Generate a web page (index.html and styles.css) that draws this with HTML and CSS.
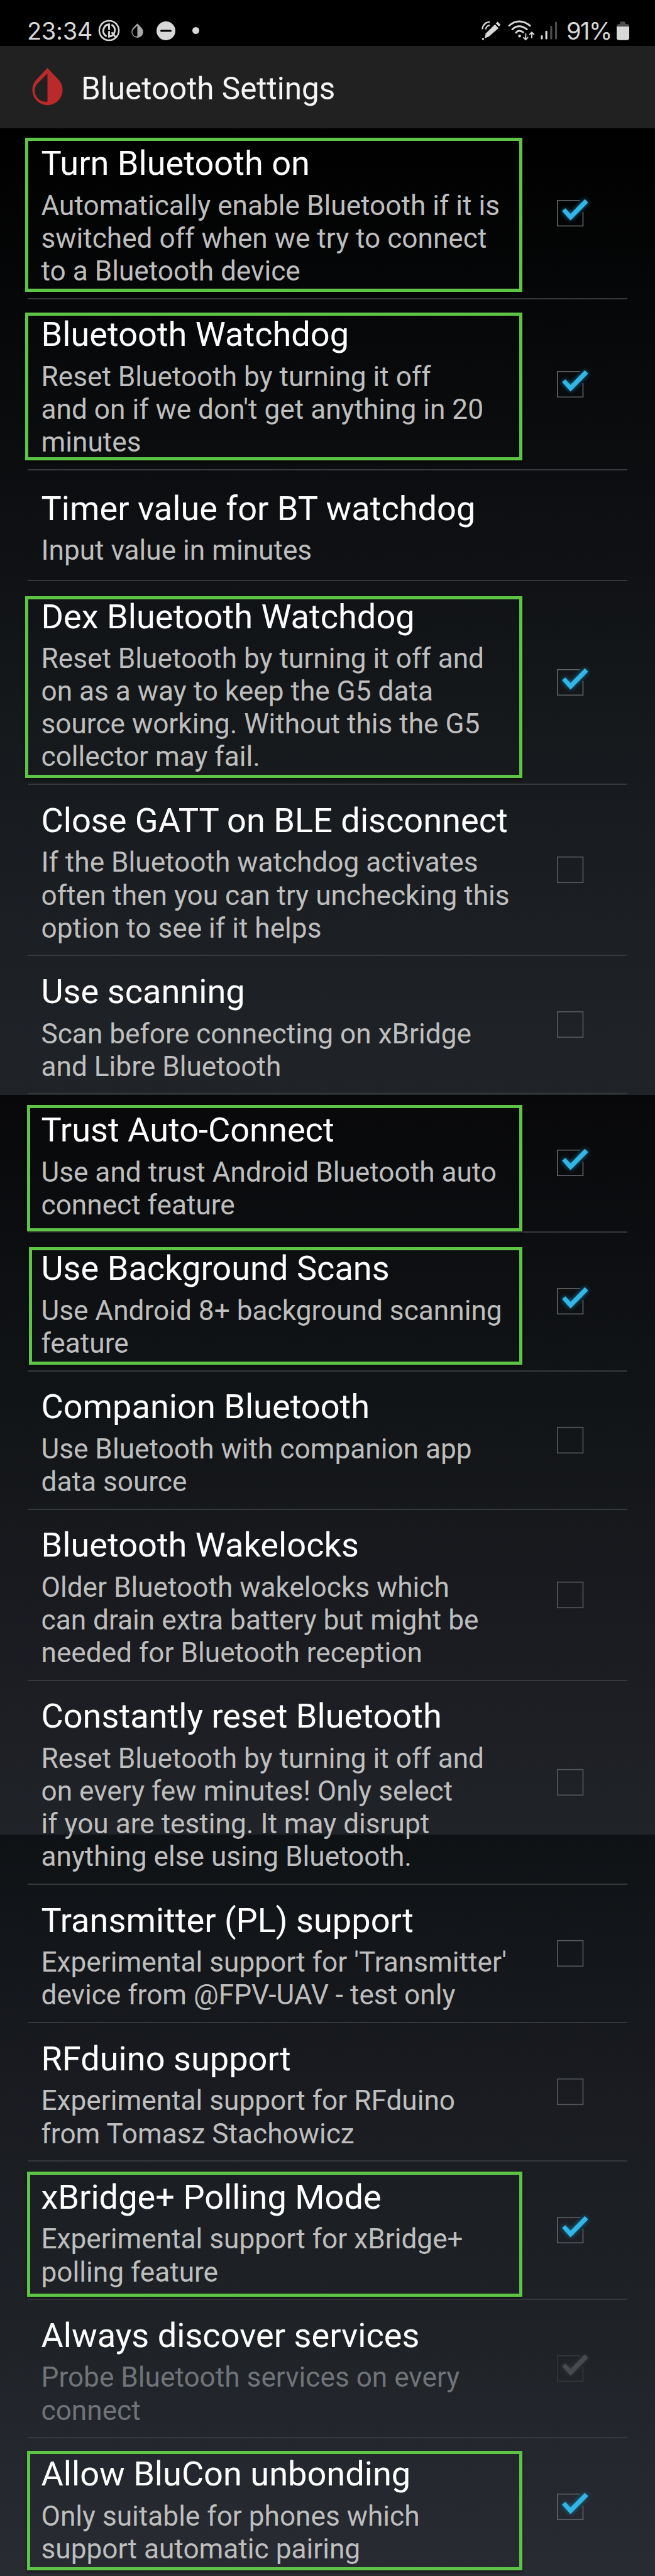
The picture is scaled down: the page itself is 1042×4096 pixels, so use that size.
FILE: index.html
```html
<!DOCTYPE html>
<html lang="en">
<head>
<meta charset="utf-8">
<title>Bluetooth Settings</title>
<link rel="stylesheet" href="styles.css">
</head>
<body>
<svg width="0" height="0" class="defs">
  <symbol id="drop" viewBox="0 0 50 62"><path fill-rule="evenodd" d="M25 0 L42 18 A24.500 24.500 0 1 1 8 18 Z M25 9 L12 22 A18 18 0 0 0 25 54.500 Z" fill="currentColor"/></symbol>
  <symbol id="off" viewBox="0 0 64 60"><rect x="7" y="9" width="42" height="42" fill="none" stroke="#55585b" stroke-width="1.700"/></symbol>
  <symbol id="on" viewBox="0 0 64 60"><path d="M44 9 H7 V51 H49 V28" fill="none" stroke="#606366" stroke-width="1.700"/><path class="tick" d="M14.500 26.500 L20 22 L28.500 31 L52 7 L57.500 12.500 L28.500 42 Z"/></symbol>
</svg>
<div class="phone">
  <header class="status">
    <span class="clock">23:34</span>
    <svg class="s-sync" viewBox="0 0 36 36"><g fill="none" stroke="#d8d8d8" stroke-linecap="round"><circle cx="18" cy="18" r="16" stroke-width="2.600"/><path d="M13 27 A10.500 10.500 0 0 1 18 8 V16" stroke-width="3"/><path d="M23 9 A10.500 10.500 0 0 1 18 28 V20 M23 22 L28 28" stroke-width="3"/></g></svg>
    <svg class="s-drop"><use href="#drop"/></svg>
    <svg class="s-dnd" viewBox="0 0 30 30"><circle cx="15" cy="15" r="15" fill="#d8d8d8"/><path d="M7.500 15H22.500" stroke="#000" stroke-width="3" stroke-linecap="round"/></svg>
    <span class="s-dot"></span>
    <span class="spacer"></span>
    <svg class="s-pen" viewBox="0 0 31 32"><g fill="none" stroke="#d8d8d8" stroke-width="2.400"><path d="M1.500 14A12 12 0 0 1 13.500 2"/><path d="M7 14A7 7 0 0 1 13.500 7.500"/></g><path d="M22 6L28 12L12 26L5 29L7 21Z" fill="#d8d8d8"/><path d="M25 3L30 8" stroke="#d8d8d8" stroke-width="4"/><circle cx="2.500" cy="30" r="1.800" fill="#d8d8d8"/></svg>
    <svg class="s-wifi" viewBox="0 0 44 34"><g fill="none" stroke="#d8d8d8" stroke-width="3" stroke-linecap="round"><path d="M2 9Q18-5 36 9"/><path d="M7 15Q18 5 31 15"/><path d="M13 20.500Q18 15 25 20"/></g><circle cx="19" cy="26" r="2.300" fill="#d8d8d8"/><path d="M29 22V32M25 28L29 32L33 28M39 30V20M35 24L39 20L43 24" fill="none" stroke="#d8d8d8" stroke-width="2"/></svg>
    <svg class="s-bars" viewBox="0 0 28 30"><g stroke-width="3.300" stroke-linecap="round"><path d="M2 24.500V28M9.500 17V28" stroke="#d8d8d8"/><path d="M17.500 9V28M25.500 2V28" stroke="#4c4c4c"/></g></svg>
    <span class="batt">91%</span>
    <svg class="s-batt" viewBox="0 0 21 31"><rect x="5.500" width="9" height="6" rx="2" fill="#4c4c4c"/><rect y="4" width="21" height="27" rx="4" fill="#4c4c4c"/><path d="M0 8.500H21V27Q21 31 17 31H4Q0 31 0 27Z" fill="#d8d8d8"/></svg>
  </header>
  <div class="bar"><svg class="logo"><use href="#drop"/></svg><h1>Bluetooth Settings</h1></div>
  <main class="list">
    <section class="row"><div class="text"><h2>Turn Bluetooth on</h2><p>Automatically enable Bluetooth if it is<br>switched off when we try to connect<br>to a Bluetooth device</p></div><svg class="box"><use href="#on"/></svg><i class="mark m1"></i></section>
    <section class="row"><div class="text"><h2>Bluetooth Watchdog</h2><p>Reset Bluetooth by turning it off<br>and on if we don't get anything in 20<br>minutes</p></div><svg class="box"><use href="#on"/></svg><i class="mark m2"></i></section>
    <section class="row"><div class="text"><h2>Timer value for BT watchdog</h2><p>Input value in minutes</p></div></section>
    <section class="row"><div class="text"><h2>Dex Bluetooth Watchdog</h2><p>Reset Bluetooth by turning it off and<br>on as a way to keep the G5 data<br>source working. Without this the G5<br>collector may fail.</p></div><svg class="box"><use href="#on"/></svg><i class="mark m3"></i></section>
    <section class="row"><div class="text"><h2>Close GATT on BLE disconnect</h2><p>If the Bluetooth watchdog activates<br>often then you can try unchecking this<br>option to see if it helps</p></div><svg class="box"><use href="#off"/></svg></section>
    <section class="row"><div class="text"><h2>Use scanning</h2><p>Scan before connecting on xBridge<br>and Libre Bluetooth</p></div><svg class="box"><use href="#off"/></svg></section>
    <section class="row"><div class="text"><h2>Trust Auto-Connect</h2><p>Use and trust Android Bluetooth auto<br>connect feature</p></div><svg class="box"><use href="#on"/></svg><i class="mark m4"></i></section>
    <section class="row"><div class="text"><h2>Use Background Scans</h2><p>Use Android 8+ background scanning<br>feature</p></div><svg class="box"><use href="#on"/></svg><i class="mark m5"></i></section>
    <section class="row"><div class="text"><h2>Companion Bluetooth</h2><p>Use Bluetooth with companion app<br>data source</p></div><svg class="box"><use href="#off"/></svg></section>
    <section class="row"><div class="text"><h2>Bluetooth Wakelocks</h2><p>Older Bluetooth wakelocks which<br>can drain extra battery but might be<br>needed for Bluetooth reception</p></div><svg class="box"><use href="#off"/></svg></section>
    <section class="row"><div class="text"><h2>Constantly reset Bluetooth</h2><p>Reset Bluetooth by turning it off and<br>on every few minutes! Only select<br>if you are testing. It may disrupt<br>anything else using Bluetooth.</p></div><svg class="box"><use href="#off"/></svg></section>
    <section class="row"><div class="text"><h2>Transmitter (PL) support</h2><p>Experimental support for 'Transmitter'<br>device from @FPV-UAV - test only</p></div><svg class="box"><use href="#off"/></svg></section>
    <section class="row"><div class="text"><h2>RFduino support</h2><p>Experimental support for RFduino<br>from Tomasz Stachowicz</p></div><svg class="box"><use href="#off"/></svg></section>
    <section class="row"><div class="text"><h2>xBridge+ Polling Mode</h2><p>Experimental support for xBridge+<br>polling feature</p></div><svg class="box"><use href="#on"/></svg><i class="mark m6"></i></section>
    <section class="row disabled"><div class="text"><h2>Always discover services</h2><p>Probe Bluetooth services on every<br>connect</p></div><svg class="box"><use href="#on"/></svg></section>
    <section class="row"><div class="text"><h2>Allow BluCon unbonding</h2><p>Only suitable for phones which<br>support automatic pairing</p></div><svg class="box"><use href="#on"/></svg><i class="mark m7"></i></section>
  </main>
</div>
</body>
</html>
```
FILE: styles.css
```css
* { box-sizing: border-box; }
body { margin: 0; background: #000; }
.defs { display: block; }
.phone {
  width: 1042px;
  height: 4096px;
  overflow: hidden;
  font-family: Roboto, sans-serif;
  color: #fff;
  background:
    linear-gradient(#000 0, #0f1114 45%, #16191c 62%, #202328 100%) 0 203px / 100% 1538px no-repeat,
    linear-gradient(#08080a 0, #111417 40%, #1b1c21 75%, #202328 100%) 0 1741px / 100% 1176px no-repeat,
    linear-gradient(#0f1215 0, #1a1c21 38%, #1e2226 65%, #292b33 100%) 0 2917px / 100% 1179px no-repeat;
}
.status {
  display: flex;
  align-items: center;
  height: 73px;
  padding: 24px 41px 0 43px;
  background: #000;
  color: #d8d8d8;
}
.status svg, .status span { flex: none; }
.clock, .batt { font-family: Inter, Roboto, sans-serif; font-size: 38px; line-height: 44px; }
.clock { width: 113px; letter-spacing: -0.3px; }
.s-sync { width: 35px; height: 35px; }
.s-drop { width: 19px; height: 24px; margin-left: 18px; color: #a8a8a8; }
.s-dnd { width: 30px; height: 30px; margin-left: 21px; }
.s-dot { width: 11px; height: 11px; margin-left: 27px; border-radius: 50%; background: #d8d8d8; }
.status .spacer { flex: 1; }
.s-pen { width: 30px; height: 31px; }
.s-wifi { width: 43px; height: 33px; margin-left: 12px; }
.s-bars { width: 27px; height: 29px; margin-left: 9px; }
.batt { width: 73px; margin-left: 14px; letter-spacing: -1.5px; }
.s-batt { width: 20px; height: 30px; margin-left: 7px; }
.bar {
  display: flex;
  align-items: center;
  height: 131px;
  padding-left: 50px;
  background: #212121;
}
.logo { width: 51px; height: 61px; color: #bb2a2a; }
.bar h1 { margin: 5px 0 0 28px; font-size: 49.400px; line-height: 60px; font-weight: 400; color: #f5f5f5; }
.list { margin: -0.600px 44px 0; }
.row {
  position: relative;
  display: flex;
  align-items: center;
  justify-content: space-between;
  min-height: 176px;
  border-bottom: 2px solid #36393c;
}
.row:last-child { border-bottom-color: transparent; }
.text { padding: 24.700px 0 16.550px 21.500px; white-space: nowrap; }
.text h2 { margin: 0; font-size: 54.150px; line-height: 64px; font-weight: 400; }
.text p { margin: 8.500px 0 0; font-size: 44.200px; line-height: 52.150px; color: #bebebe; }
.box { flex: none; width: 62px; height: 58px; margin-right: 56px; overflow: visible; }
.tick { fill: #33b5e5; filter: drop-shadow(0 0 4px #0a7fa8); }
.disabled p { color: #707377; }
.disabled .box { filter: grayscale(1); opacity: 0.32; }
.mark {
  position: absolute;
  left: -4px;
  width: 791px;
  border: 5px solid #5ec445;
  box-shadow: 0 3px 4px rgba(0, 0, 0, 0.4);
}
.m1 { top: 16px; height: 245px; }
.m2 { top: 21px; height: 235px; }
.m3 { top: 24.500px; height: 289px; }
.m4 { top: 17px; height: 201px; left: -1px; width: 788px; }
.m5 { top: 22.700px; height: 187px; left: 2px; width: 785px; }
.m6 { top: 16.200px; height: 199px; left: -1px; width: 788px; }
.m7 { top: 19.700px; height: 190px; left: -1px; width: 788px; }
```
